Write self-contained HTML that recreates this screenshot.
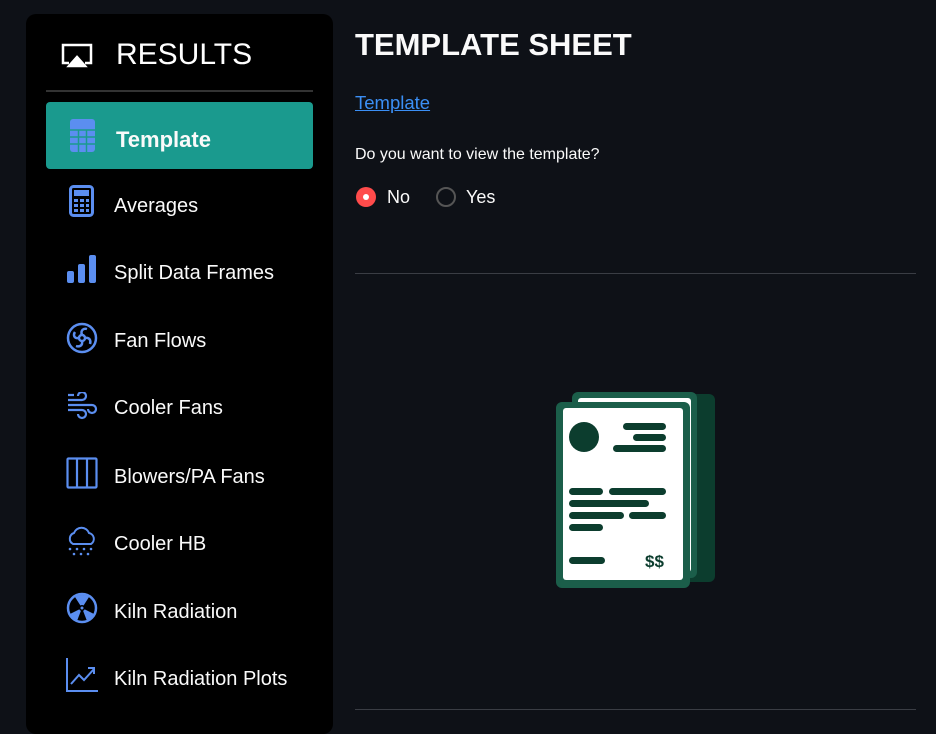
<!DOCTYPE html><html><head><style>
body{margin:0;width:936px;height:713px;background:#0e1117;overflow:hidden;font-family:"Liberation Sans",sans-serif;color:#fafafa;position:relative}
.sb{position:absolute;left:26px;top:14px;width:307px;height:720px;background:#000;border-radius:10px}
.hd{position:absolute;left:116px;top:38px;font-size:30px;color:#fff}
.dv{position:absolute;left:46px;top:90px;width:267px;height:2px;background:#333}
.act{position:absolute;left:46px;top:102px;width:267px;height:67px;background:#1a9a8e;border-radius:4px}
.it{position:absolute;left:114px;font-size:20px;color:#fafafa}
.ic{position:absolute;left:64px}
.m{position:absolute;left:355px}
</style></head><body>
<div class="sb"></div>
<svg class="ic" style="left:60px;top:42px" width="34" height="28" viewBox="0 0 34 28" fill="none" stroke="#fff" stroke-width="2.5"><path d="M9 21H3V3h28v18h-6"/><path d="M17 15l8 9H9z" fill="#fff"/></svg>
<div class="hd">RESULTS</div>
<div class="dv"></div>
<div class="act"></div>
<svg class="ic" style="left:70px;top:119px" width="25" height="33" viewBox="0 0 25 33"><rect width="25" height="33" rx="3" fill="#5b8ef0"/><g stroke="#1a9a8e" stroke-width="1.5"><path d="M0 11h25M0 18h25M0 25h25M8.5 11v22M16.5 11v22"/></g></svg>
<div class="it" style="top:127px;left:116px;font-weight:bold;font-size:22px">Template</div>
<svg class="ic" style="left:69px;top:185px" width="25" height="32" viewBox="0 0 25 32"><rect x="1.5" y="1.5" width="22" height="29" rx="3" fill="none" stroke="#5b8ef0" stroke-width="3"/><rect x="5" y="5" width="15" height="6" fill="#5b8ef0"/><g fill="#5b8ef0"><rect x="5" y="14" width="4" height="3"/><rect x="11" y="14" width="4" height="3"/><rect x="17" y="14" width="3" height="3"/><rect x="5" y="19" width="4" height="3"/><rect x="11" y="19" width="4" height="3"/><rect x="17" y="19" width="3" height="3"/><rect x="5" y="24" width="4" height="3"/><rect x="11" y="24" width="4" height="3"/><rect x="17" y="24" width="3" height="3"/></g></svg>
<div class="it" style="top:195px">Averages</div>
<svg class="ic" style="left:67px;top:255px" width="30" height="28" viewBox="0 0 30 28" fill="#5b8ef0"><rect x="0" y="16" width="7" height="12" rx="2"/><rect x="11" y="9" width="7" height="19" rx="2"/><rect x="22" y="0" width="7" height="28" rx="2"/></svg>
<div class="it" style="top:262px">Split Data Frames</div>
<svg class="ic" style="left:66px;top:322px" width="32" height="32" viewBox="0 0 32 32" fill="none" stroke="#5b8ef0" stroke-width="2.5"><circle cx="16" cy="16" r="14"/><circle cx="16" cy="16" r="3"/><path d="M16 13C14 8 18 6 21 7M19 16c5-1 6 3 5 6M16 19c1 5-3 6-6 5M13 16c-5 1-6-3-4-6"/></svg>
<div class="it" style="top:330px">Fan Flows</div>
<svg class="ic" style="left:66px;top:392px" width="32" height="28" viewBox="0 0 32 28" fill="none" stroke="#5b8ef0" stroke-width="2.2"><path d="M2 8h14a4 4 0 1 0-4-4M2 13h24a4 4 0 1 1-4 4M2 18h14a4 4 0 1 1-4 4M2 3h6"/></svg>
<div class="it" style="top:397px">Cooler Fans</div>
<svg class="ic" style="left:66px;top:457px" width="32" height="32" viewBox="0 0 32 32" fill="none" stroke="#5b8ef0" stroke-width="2.2"><rect x="1.5" y="1.5" width="29" height="29" rx="1"/><path d="M11 1.5v29M21 1.5v29"/></svg>
<div class="it" style="top:466px">Blowers/PA Fans</div>
<svg class="ic" style="left:66px;top:526px" width="32" height="30" viewBox="0 0 32 30" fill="none" stroke="#5b8ef0" stroke-width="2"><path d="M7 18a6 6 0 0 1 1-11 8 8 0 0 1 15 0 6 6 0 0 1 2 11z"/><g fill="#5b8ef0" stroke="none"><circle cx="4" cy="23" r="1.3"/><circle cx="11" cy="23" r="1.3"/><circle cx="18" cy="23" r="1.3"/><circle cx="25" cy="23" r="1.3"/><circle cx="8" cy="28" r="1.3"/><circle cx="15" cy="28" r="1.3"/><circle cx="22" cy="28" r="1.3"/></g></svg>
<div class="it" style="top:533px">Cooler HB</div>
<svg class="ic" style="left:66px;top:592px" width="32" height="32" viewBox="0 0 32 32"><circle cx="16" cy="16" r="14" fill="none" stroke="#5b8ef0" stroke-width="2.5"/><g fill="#5b8ef0"><path d="M16 16L9 5a13 13 0 0 1 14 0z"/><path d="M16 16l12 6a13 13 0 0 1-7 7z"/><path d="M16 16l-12 6a13 13 0 0 0 7 7z"/></g><circle cx="16" cy="16" r="3" fill="#000"/><circle cx="16" cy="16" r="1.5" fill="#5b8ef0"/></svg>
<div class="it" style="top:601px">Kiln Radiation</div>
<svg class="ic" style="left:66px;top:658px" width="32" height="34" viewBox="0 0 32 34" fill="none" stroke="#5b8ef0" stroke-width="2"><path d="M1 0v33h31"/><path d="M5 26l8-9 5 5 10-11M22 10h6v6"/></svg>
<div class="it" style="top:668px">Kiln Radiation Plots</div>

<div class="m" style="top:27px;font-size:31px;font-weight:bold;letter-spacing:0px">TEMPLATE SHEET</div>
<div class="m" style="top:92px;font-size:18.5px;color:#3b8ff5;text-decoration:underline">Template</div>
<div class="m" style="top:146px;font-size:16px">Do you want to view the template?</div>
<div class="m" style="top:187px;left:356px;width:20px;height:20px;border-radius:50%;background:#ff4b4b"></div>
<div class="m" style="top:194px;left:363px;width:6px;height:6px;border-radius:50%;background:#fff"></div>
<div class="m" style="top:187px;left:387px;font-size:18px">No</div>
<div class="m" style="top:187px;left:436px;width:16px;height:16px;border-radius:50%;border:2px solid #555"></div>
<div class="m" style="top:187px;left:466px;font-size:18px">Yes</div>
<div class="m" style="top:273px;width:561px;height:1px;background:#3a3d44"></div>
<div class="m" style="top:709px;width:561px;height:1px;background:#3a3d44"></div>
<svg style="position:absolute;left:550px;top:388px" width="170" height="205" viewBox="0 0 170 205">
<rect x="30" y="6" width="135" height="188" rx="6" fill="#0c3d2e"/>
<rect x="22" y="4" width="125" height="186" rx="6" fill="#1b5e4a"/><rect x="28" y="10" width="113" height="174" rx="3" fill="#fff"/>
<rect x="6" y="14" width="134" height="186" rx="6" fill="#1b5e4a"/><rect x="13" y="20" width="120" height="172" rx="3" fill="#fff"/>
<g fill="#0c3d2e"><circle cx="34" cy="49" r="15"/><rect x="73" y="35" width="43" height="7" rx="3.5"/><rect x="83" y="46" width="33" height="7" rx="3.5"/><rect x="63" y="57" width="53" height="7" rx="3.5"/>
<rect x="19" y="100" width="34" height="7" rx="3.5"/><rect x="59" y="100" width="57" height="7" rx="3.5"/><rect x="19" y="112" width="80" height="7" rx="3.5"/><rect x="19" y="124" width="55" height="7" rx="3.5"/><rect x="79" y="124" width="37" height="7" rx="3.5"/><rect x="19" y="136" width="34" height="7" rx="3.5"/><rect x="19" y="169" width="36" height="7" rx="3.5"/>
<text x="95" y="179" font-family="Liberation Sans" font-weight="bold" font-size="17">$$</text></g>
</svg>
</body></html>
